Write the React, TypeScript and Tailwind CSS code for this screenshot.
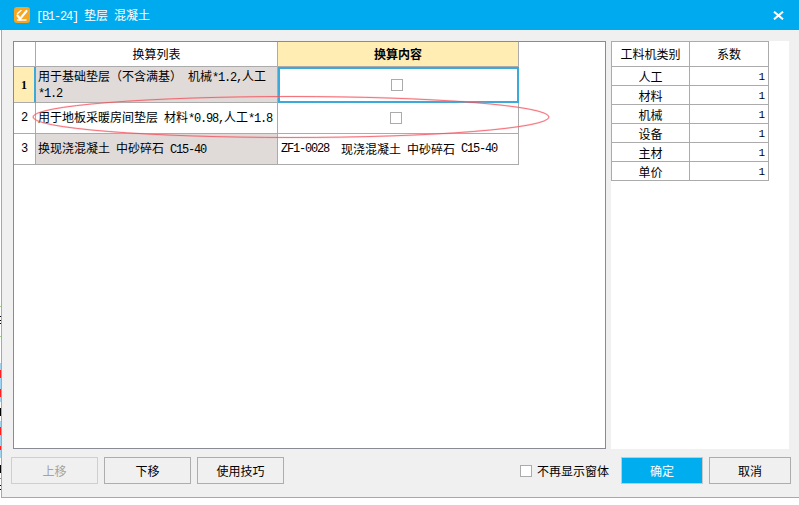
import type { ReactNode } from 'react';

const CJK = '"Noto Sans CJK SC", "Liberation Sans", sans-serif';

// SimSun look: latin runs are half the width of a 12px CJK glyph
function Txt({ children }: { children: string }) {
  const parts = children.split(/([\x20-\x7e]+)/).filter(Boolean);
  return (
    <>
      {parts.map((p, i) =>
        /^[\x20-\x7e]+$/.test(p) ? (
          <span key={i} className="font-['Liberation_Mono',monospace] text-[12px] tracking-[-1.2px] whitespace-pre">
            {p}
          </span>
        ) : (
          <span key={i}>{p}</span>
        ),
      )}
    </>
  );
}

function Box() {
  return <span className="block h-3 w-3 border border-[#ababab] bg-white" />;
}

function Btn({ children, disabled, primary, w }: { children: ReactNode; disabled?: boolean; primary?: boolean; w: string }) {
  return (
    <button
      type="button"
      className={
        primary
          ? `h-[27px] ${w} border border-[#c8c8c8] bg-[#00aef0] text-white`
          : disabled
            ? `h-[27px] ${w} border border-[#cfcfcf] bg-[#f0f0f0] text-[#a3a3a3]`
            : `h-[27px] ${w} border border-[#adadad] bg-[#f0f0f0] text-black`
      }
    >
      {children}
    </button>
  );
}

// what shows of the window behind, one pixel wide down the left side
function BehindStrip() {
  return (
    <div className="flex w-px shrink-0 flex-col bg-white">
      <div className="h-[276px]" />
      <div className="h-[1px] bg-[#9fd08a]" />
      <div className="h-[9px]" />
      <div className="h-[1px] bg-black" />
      <div className="h-[3px]" />
      <div className="h-[1px] bg-black" />
      <div className="h-[2px]" />
      <div className="h-[1px] bg-black" />
      <div className="h-[12px]" />
      <div className="h-[1px] bg-[#9fd08a]" />
      <div className="h-[26px]" />
      <div className="h-[7px] bg-[#9fd4f0]" />
      <div className="h-[8px] bg-[#ff2020]" />
      <div className="h-[11px] bg-[#9fd4f0]" />
      <div className="h-[8px] bg-[#ff2020]" />
      <div className="h-[5px] bg-[#9fd4f0]" />
      <div className="h-[6px]" />
      <div className="h-[8px] bg-black" />
      <div className="h-[5px]" />
      <div className="h-[6px] bg-[#9fd4f0]" />
      <div className="h-[8px] bg-[#ff2020]" />
      <div className="h-[11px] bg-[#9fd4f0]" />
      <div className="h-[4px] bg-[#ff2020]" />
      <div className="h-[8px] bg-[#9fd4f0]" />
      <div className="h-[7px]" />
      <div className="h-[8px] bg-black" />
      <div className="h-[5px]" />
      <div className="h-[1px] bg-[#888888]" />
      <div className="h-[6px]" />
      <div className="h-[1px] bg-black" />
      <div className="h-[3px]" />
      <div className="h-[1px] bg-black" />
    </div>
  );
}

const conv = [
  { n: '1', h: 'h-[36px]', text: '用于基础垫层（不含满基） 机械*1.2,人工*1.2' },
  { n: '2', h: 'h-[31px]', text: '用于地板采暖房间垫层 材料*0.98,人工*1.8' },
  { n: '3', h: 'h-[31px]', text: '换现浇混凝土 中砂碎石 C15-40' },
];

const factors = ['人工', '材料', '机械', '设备', '主材', '单价'];

export default function App() {
  return (
    <div className="flex h-[505px] w-[799px] flex-col overflow-hidden bg-white text-[12px] leading-[14px] text-black" style={{ fontFamily: CJK }}>
      <header className="flex h-[30px] shrink-0 items-center bg-[#00aaee] pl-[14px] pr-[15px] text-white">
        <svg width="16" height="16" viewBox="0 0 16 16" className="shrink-0">
          <rect width="16" height="16" rx="3" fill="#f6a623" />
          <path d="M3.5 8.5l2.5 3.5 6.5-8" fill="none" stroke="#fff" strokeWidth="2.2" strokeLinecap="round" />
          <path d="M7 3.5L3.5 6.5M3.5 13h8.5" fill="none" stroke="#fff" strokeWidth="1.4" strokeLinecap="round" />
        </svg>
        <span className="ml-[6px] flex-1 pt-px text-[12px]">
          <Txt>[B1-24] 垫层 混凝土</Txt>
        </span>
        <svg width="11" height="9" viewBox="0 0 11 9">
          <path d="M1 .7l9 7.6M10 .7L1 8.3" stroke="#fff" strokeWidth="2" />
        </svg>
      </header>

      <div className="flex h-[468px] shrink-0">
        <BehindStrip />
        <div className="relative flex w-[798px] flex-col border-b border-l border-[#a8a8a8] bg-[#f0f0f0]">
          <div className="box-content flex h-[408px] pl-[11px] pt-[11px]">
            <div className="h-[408px] w-[593px] shrink-0 border border-[#8a8a94] bg-white">
              <div className="grid w-[505px] grid-cols-[22px_242px_241px]">
                <div className="h-[25px] border-b border-r border-[#ababab]" />
                <div className="flex h-[25px] items-center justify-center border-b border-r border-[#ababab]">换算列表</div>
                <div className="flex h-[25px] items-center justify-center border-b border-r border-[#ababab] bg-[#ffedb3] font-bold">换算内容</div>

                {conv.map((r, i) => (
                  <div key={r.n} className="contents">
                    <div
                      className={
                        i === 0
                          ? `flex ${r.h} items-center justify-center border-b border-r-2 border-b-[#ababab] border-r-[#3ba9d9] bg-[#ffedb3] font-['Liberation_Serif',serif] font-bold`
                          : `flex ${r.h} items-center justify-center border-b border-r border-[#ababab] font-['Liberation_Mono',monospace]`
                      }
                    >
                      {r.n}
                    </div>
                    <div
                      className={
                        i === 1
                          ? `flex ${r.h} items-center border-b border-r border-[#ababab] bg-white pl-[2px]`
                          : `flex ${r.h} items-center border-b border-r border-[#ababab] bg-[#e0dbd9] pl-[2px]`
                      }
                    >
                      <span className="block">
                        <Txt>{r.text}</Txt>
                      </span>
                    </div>
                    {i === 2 ? (
                      <div className={`flex ${r.h} items-center border-b border-r border-[#ababab] pl-[3px]`}>
                        <Txt>ZF1-0028  现浇混凝土 中砂碎石 C15-40</Txt>
                      </div>
                    ) : (
                      <div
                        className={
                          i === 0
                            ? `flex ${r.h} items-center justify-center border-2 border-[#3ba9d9] pr-[4px]`
                            : `flex ${r.h} items-center justify-center border-b border-r border-[#ababab] pr-[4px]`
                        }
                      >
                        <Box />
                      </div>
                    )}
                  </div>
                ))}
              </div>
            </div>

            <div className="ml-[5px] h-[408px] w-[178px] shrink-0 bg-white">
              <div className="w-[158px] border-l border-t border-[#ababab]">
                <div className="grid grid-cols-[78px_79px]">
                  <div className="flex h-[25px] items-center justify-center border-b border-r border-[#ababab]">工料机类别</div>
                  <div className="flex h-[25px] items-center justify-center border-b border-r border-[#ababab]">系数</div>
                  {factors.map((f) => (
                    <div key={f} className="contents">
                      <div className="flex h-[19px] items-center justify-center border-b border-r border-[#ababab] pt-[2px]">{f}</div>
                      <div className="flex h-[19px] items-center justify-end border-b border-r border-[#ababab] pr-[3px] pt-[2px] font-['Liberation_Mono',monospace] text-[11px]">
                        1
                      </div>
                    </div>
                  ))}
                </div>
              </div>
            </div>
          </div>

          <footer className="flex items-center pl-[9px] pt-[8px]">
            <Btn disabled w="w-[87px]">上移</Btn>
            <div className="ml-[6px]">
              <Btn w="w-[87px]">下移</Btn>
            </div>
            <div className="ml-[6px]">
              <Btn w="w-[87px]">使用技巧</Btn>
            </div>
            <label className="ml-[236px] flex items-center">
              <Box />
              <span className="ml-[5px]">不再显示窗体</span>
            </label>
            <div className="ml-[12px]">
              <Btn primary w="w-[82px]">确定</Btn>
            </div>
            <div className="ml-[6px]">
              <Btn w="w-[82px]">取消</Btn>
            </div>
          </footer>

          {/* hand-drawn annotation over the table */}
          <svg className="pointer-events-none absolute left-[28px] top-[64px]" width="522" height="46" viewBox="0 0 522 46">
            <ellipse cx="261" cy="23" rx="258" ry="20.5" fill="none" stroke="#ffa0a5" strokeOpacity="0.35" strokeWidth="2" />
            <ellipse cx="261" cy="23" rx="258" ry="20.5" fill="none" stroke="#ee3f4a" strokeOpacity="0.85" strokeWidth="0.8" />
          </svg>
        </div>
      </div>
    </div>
  );
}
